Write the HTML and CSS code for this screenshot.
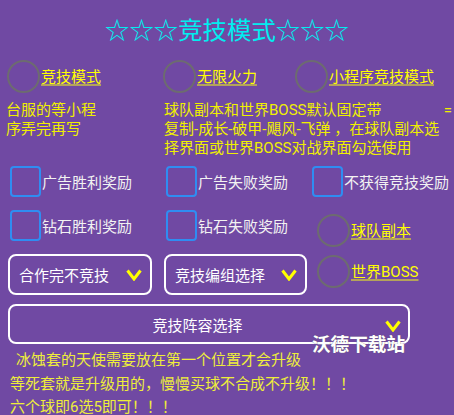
FILE: index.html
```html
<!DOCTYPE html>
<html>
<head>
<meta charset="utf-8">
<link rel="stylesheet" href="styles.css">
</head>
<body>
<div class="page">
  <div class="title">☆☆☆竞技模式☆☆☆</div>

  <div class="row radios">
    <div class="cell c1"><span class="radio"></span><span class="link">竞技模式</span></div>
    <div class="cell c2"><span class="radio"></span><span class="link">无限火力</span></div>
    <div class="cell c3"><span class="radio"></span><span class="link">小程序竞技模式</span></div>
  </div>

  <div class="info">
    <div class="info-left">台服的等小程<br>序弄完再写</div>
    <div class="info-right">
      <div class="line spread"><span>球队副本和世界BOSS默认固定带</span><span>=</span></div>
      <div class="line">复制-成长-破甲-飓风-飞弹 ，在球队副本选</div>
      <div class="line">择界面或世界BOSS对战界面勾选使用</div>
    </div>
  </div>

  <div class="row checks first">
    <div class="cell k1"><span class="box"></span><span class="lbl">广告胜利奖励</span></div>
    <div class="cell k2"><span class="box"></span><span class="lbl">广告失败奖励</span></div>
    <div class="cell k3"><span class="box"></span><span class="lbl">不获得竞技奖励</span></div>
  </div>

  <div class="row checks second">
    <div class="cell k1"><span class="box"></span><span class="lbl">钻石胜利奖励</span></div>
    <div class="cell k2"><span class="box"></span><span class="lbl">钻石失败奖励</span></div>
    <div class="cell k4"><span class="radio"></span><span class="link">球队副本</span></div>
  </div>

  <div class="row selects">
    <div class="select s1"><span>合作完不竞技</span><svg class="chev" viewBox="0 0 16 12"><polyline points="1.5,1.5 8,10 14.5,1.5"/></svg></div>
    <div class="select s2"><span>竞技编组选择</span><svg class="chev" viewBox="0 0 16 12"><polyline points="1.5,1.5 8,10 14.5,1.5"/></svg></div>
    <div class="cell k5"><span class="radio"></span><span class="link">世界BOSS</span></div>
  </div>

  <div class="bigselect">
    <span class="bigtext">竞技阵容选择</span>
    <svg class="chev" viewBox="0 0 16 12"><polyline points="1.5,1.5 8,10 14.5,1.5"/></svg>
    <span class="watermark">沃德下载站</span>
  </div>

  <div class="notes">
    <div class="note indent">冰蚀套的天使需要放在第一个位置才会升级</div>
    <div class="note">等死套就是升级用的，慢慢买球不合成不升级！！！</div>
    <div class="note">六个球即6选5即可！！！</div>
  </div>
</div>
</body>
</html>
```

FILE: styles.css
```css
html, body {
  margin: 0;
  padding: 0;
  background: #7049a3;
}
.page {
  width: 454px;
  height: 415px;
  overflow: hidden;
  font-family: Roboto, "Noto Sans CJK SC", sans-serif;
  font-size: 15px;
  color: #f2f200;
}
.title {
  margin-top: 13px;
  height: 32px;
  line-height: 32px;
  text-align: center;
  font-size: 24.4px;
  color: #00eef0;
  font-family: "Noto Sans CJK SC", sans-serif;
}
.row {
  display: flex;
  align-items: flex-start;
}
.cell {
  display: flex;
  align-items: center;
}
.radios {
  margin-top: 15px;
  padding-left: 7px;
}
.radios .c1 { width: 156px; }
.radios .c2 { width: 132px; }
.radio {
  box-sizing: border-box;
  width: 33px;
  height: 33px;
  border: 2.5px solid #6d6b70;
  border-radius: 50%;
  flex: none;
  margin-right: 1px;
}
.link {
  color: #ffff00;
  line-height: 20px;
  text-decoration: underline;
  text-decoration-color: #b4a35a;
  text-decoration-thickness: 1.5px;
  text-underline-offset: 2px;
}
.info {
  margin-top: 8px;
  display: flex;
  line-height: 19px;
  color: #f0f000;
}
.info-left {
  width: 164px;
  padding-left: 6px;
  box-sizing: border-box;
}
.info-right {
  width: 288px;
}
.line {
  white-space: nowrap;
}
.spread {
  display: flex;
  justify-content: space-between;
}
.checks.first { margin-top: 8px; }
.checks.second { margin-top: 13px; }
.checks {
  padding-left: 10px;
}
.checks .k1 { width: 156px; }
.checks .k2 { width: 146px; }
.k4 {
  margin-left: 5px;
  margin-top: 4px;
}
.box {
  box-sizing: border-box;
  width: 31px;
  height: 31px;
  border: 2px solid #2f8df2;
  border-radius: 4px;
  flex: none;
  margin-right: 1px;
}
.lbl {
  color: #f2f2f2;
}
.selects {
  margin-top: 7px;
  padding-left: 8px;
}
.select {
  box-sizing: border-box;
  height: 41px;
  border: 2.5px solid #ffffff;
  border-radius: 8px;
  display: flex;
  align-items: center;
  justify-content: space-between;
  padding-left: 9px;
  padding-right: 8px;
  color: #ffffff;
}
.s1 { width: 144px; }
.s2 { width: 143px; margin-left: 12px; }
.k5 {
  margin-left: 10px;
  margin-top: 1px;
}
.chev {
  width: 16px;
  height: 12px;
  flex: none;
}
.chev polyline {
  fill: none;
  stroke: #ffff00;
  stroke-width: 3;
}
.bigselect {
  position: relative;
  box-sizing: border-box;
  margin-top: 9px;
  margin-left: 8px;
  width: 402px;
  height: 40px;
  border: 2.5px solid #ffffff;
  border-radius: 8px;
  display: flex;
  align-items: center;
  padding-right: 7px;
  color: #ffffff;
}
.bigtext {
  flex: 1;
  text-align: center;
  padding-top: 1px;
}
.bigselect .chev {
  margin-top: 4px;
}
.watermark {
  position: absolute;
  left: 302px;
  top: 25px;
  font-size: 18.6px;
  font-weight: bold;
  line-height: 24px;
  white-space: nowrap;
  color: #ffffff;
  font-family: "Noto Sans CJK SC", sans-serif;
  text-shadow: 0 0 1px #666666;
}
.notes {
  margin-top: 5px;
  line-height: 23.5px;
  color: #eeee3a;
}
.note {
  padding-left: 10px;
  white-space: nowrap;
}
.note.indent {
  padding-left: 16px;
}
```
